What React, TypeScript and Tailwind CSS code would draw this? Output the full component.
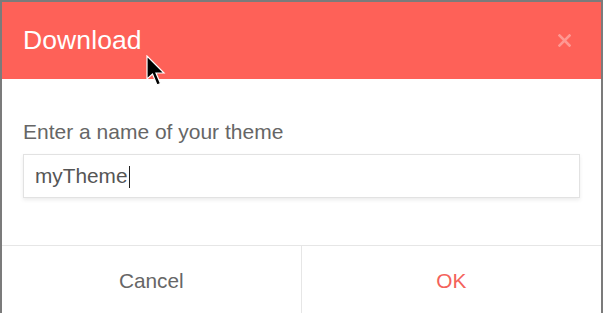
import React, { useState } from 'react';

const App: React.FC = () => {
  const [name, setName] = useState('myTheme');

  return (
    <div className="w-[603px] h-[313px] overflow-hidden bg-[#7b7b7b] pt-[2px] pl-[2px] pr-[2px]" style={{ fontFamily: '"Liberation Sans", Arial, sans-serif' }}>
      <div className="relative bg-white h-[330px] flex flex-col">
        {/* Header */}
        <div className="h-[77px] bg-[#fe6158] flex items-center justify-between pl-[21px] pr-[30px]">
          <h3 className="text-[26.5px] text-white leading-none tracking-[0.1px]">Download</h3>
          <button className="text-white/35 leading-none">
            <svg width="13" height="13" viewBox="0 0 13 13">
              <path d="M1.5 1.5 L11.5 11.5 M11.5 1.5 L1.5 11.5" stroke="currentColor" strokeWidth="2.6" strokeLinecap="square" />
            </svg>
          </button>
        </div>

        {/* Body */}
        <div className="pt-[42px] px-[21px] h-[167px] border-b border-[#e6e6e6]">
          <label htmlFor="themeName" className="block text-[21px] text-[#666] leading-none mb-[12px]">
            Enter a name of your theme
          </label>
          <div className="relative h-[44px] w-[557px] border border-[#e2e2e2] shadow-[0_2px_4px_rgba(0,0,0,0.08)] flex items-center pl-[11px]">
            <input
              id="themeName"
              value={name}
              onChange={(e) => setName(e.target.value)}
              className="w-full outline-none text-[20.8px] text-[#555] bg-transparent"
            />
            <span className="absolute left-[105px] top-[11px] w-px h-[22px] bg-[#222]" />
          </div>
        </div>

        {/* Footer */}
        <div className="grid grid-cols-2 h-[70px]">
          <button className="text-[20.8px] text-[#666] border-r border-[#e6e6e6]">Cancel</button>
          <button className="text-[20.8px] text-[#f4625a]">OK</button>
        </div>

        {/* mouse pointer */}
        <svg className="absolute left-[143px] top-[53px]" width="22" height="34" viewBox="0 0 22 34">
          <path d="M2 1 L2 24 L7.5 19 L12 30 L15.5 28.5 L11 18 L19 18 Z" fill="#000" stroke="#fff" strokeWidth="1.2" strokeLinejoin="miter" />
        </svg>
      </div>
    </div>
  );
};

export default App;
